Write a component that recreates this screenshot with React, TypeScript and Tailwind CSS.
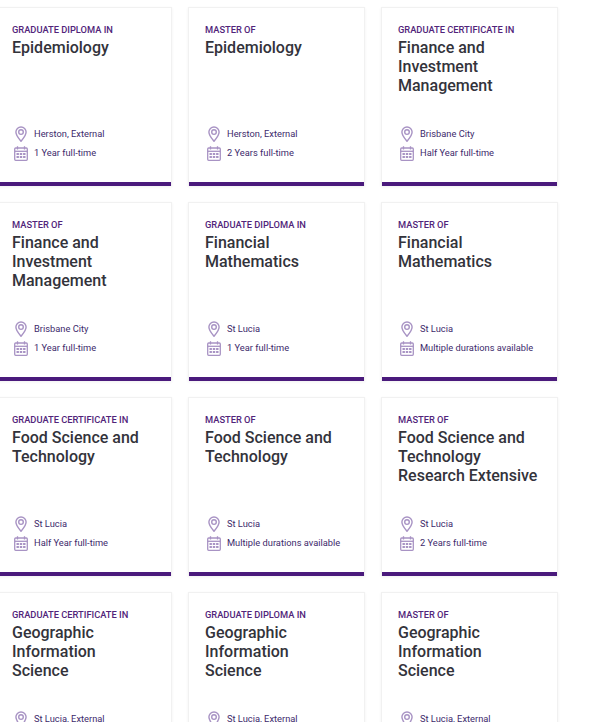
const courses = [
  { level: "GRADUATE DIPLOMA IN", title: "Epidemiology", place: "Herston, External", time: "1 Year full-time" },
  { level: "MASTER OF", title: "Epidemiology", place: "Herston, External", time: "2 Years full-time" },
  { level: "GRADUATE CERTIFICATE IN", title: "Finance and Investment Management", place: "Brisbane City", time: "Half Year full-time" },
  { level: "MASTER OF", title: "Finance and Investment Management", place: "Brisbane City", time: "1 Year full-time" },
  { level: "GRADUATE DIPLOMA IN", title: "Financial Mathematics", place: "St Lucia", time: "1 Year full-time" },
  { level: "MASTER OF", title: "Financial Mathematics", place: "St Lucia", time: "Multiple durations available" },
  { level: "GRADUATE CERTIFICATE IN", title: "Food Science and Technology", place: "St Lucia", time: "Half Year full-time" },
  { level: "MASTER OF", title: "Food Science and Technology", place: "St Lucia", time: "Multiple durations available" },
  { level: "MASTER OF", title: "Food Science and Technology Research Extensive", place: "St Lucia", time: "2 Years full-time" },
  { level: "GRADUATE CERTIFICATE IN", title: "Geographic Information Science", place: "St Lucia, External", time: "Half Year full-time" },
  { level: "GRADUATE DIPLOMA IN", title: "Geographic Information Science", place: "St Lucia, External", time: "1 Year full-time" },
  { level: "MASTER OF", title: "Geographic Information Science", place: "St Lucia, External", time: "2 Years full-time" },
];

function Pin() {
  return (
    <svg width="14" height="16" viewBox="0 0 14 16" fill="none" stroke="#a893c4" strokeWidth="1.4" className="shrink-0">
      <path d="M7 15.2C4.6 12.4 1.9 9.6 1.9 6.1a5.1 5.1 0 0 1 10.2 0C12.1 9.6 9.4 12.4 7 15.2z" />
      <circle cx="7" cy="6.1" r="2.3" />
    </svg>
  );
}

function Calendar() {
  return (
    <svg width="14" height="15" viewBox="0 0 14 15" fill="none" stroke="#a893c4" strokeWidth="1.3" className="shrink-0">
      <rect x="0.7" y="2" width="12.6" height="12.3" rx="1" />
      <path d="M3.5 0.3v3.2M10.5 0.3v3.2" />
      <path d="M0.7 5.3h12.6" />
      <path d="M2.5 8h9M2.5 11h9" strokeWidth="2" strokeDasharray="2.4 0.9" />
    </svg>
  );
}

function Card({ level, title, place, time }: (typeof courses)[number]) {
  return (
    <div className="w-[177px] h-[179px] flex flex-col bg-white border border-[#f1f1f1] border-b-0 shadow-[0_1px_3px_rgba(0,0,0,0.06)]">
      <div className="flex-1 flex flex-col pl-[16px] pt-[16px]">
        <div className="text-[9.3px] leading-[11px] font-medium text-[#51247a] whitespace-nowrap">{level}</div>
        <div className="mt-[3px] w-[140px] text-[16px] leading-[19.2px] font-medium text-[#33333b]">{title}</div>
        <div className="mt-auto mb-[21px] flex flex-col gap-[3px]">
          <div className="flex items-center h-[16px]">
            <span className="w-[22px] shrink-0 flex justify-center pr-[4px]">
              <Pin />
            </span>
            <span className="text-[9.3px] text-[#3d2a6b] whitespace-nowrap">{place}</span>
          </div>
          <div className="flex items-center h-[16px]">
            <span className="w-[22px] shrink-0 flex justify-center pr-[4px]">
              <Calendar />
            </span>
            <span className="text-[9.3px] text-[#3d2a6b] whitespace-nowrap">{time}</span>
          </div>
        </div>
      </div>
      <div className="h-[4px] bg-[#4a1a7c]" />
    </div>
  );
}

export default function App() {
  return (
    <div className="w-[600px] h-[722px] overflow-hidden bg-white font-['Roboto',sans-serif]">
      <div className="ml-[-5px] pt-[7px] w-[620px] grid grid-cols-[177px_177px_177px] gap-x-[16px] gap-y-[16px]">
        {courses.map((c) => (
          <Card key={c.level + c.title} {...c} />
        ))}
      </div>
    </div>
  );
}
